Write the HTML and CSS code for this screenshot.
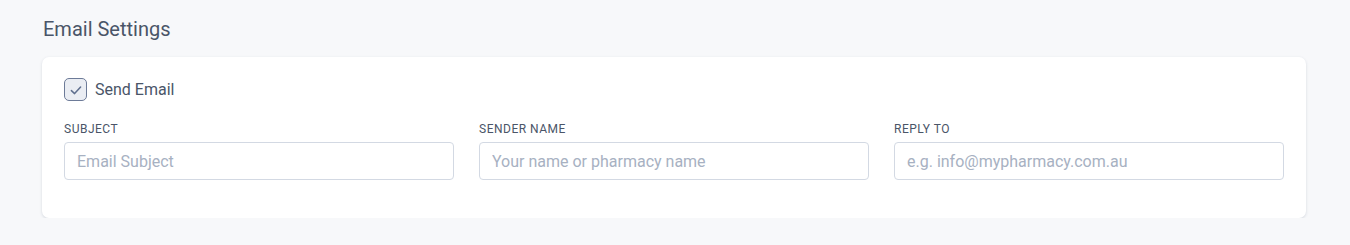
FILE: index.html
```html
<!DOCTYPE html>
<html lang="en">
  <head>
    <meta charset="UTF-8" />
    <meta name="viewport" content="width=device-width, initial-scale=1.0" />
    <title>Email Settings</title>
    <link rel="stylesheet" href="styles.css">
  </head>
  <body>
    <div class="section">
      <h2 class="section-title">Email Settings</h2>

      <div class="card">
        <label class="check-row">
          <span class="check-box">
            <svg width="14" height="14" viewBox="0 0 14 14">
              <path d="M2.4 7.6 L5.6 10.6 L11.6 4" fill="none" stroke="#5f6f8e" stroke-width="1.5" stroke-linecap="round" stroke-linejoin="round" />
            </svg>
          </span>
          <span class="check-label">Send Email</span>
        </label>

        <div class="fields">
          <div class="field">
            <label for="subject">Subject</label>
            <input type="text" id="subject" placeholder="Email Subject" />
          </div>
          <div class="field">
            <label for="senderName">Sender Name</label>
            <input type="text" id="senderName" placeholder="Your name or pharmacy name" />
          </div>
          <div class="field">
            <label for="replyTo">Reply To</label>
            <input type="text" id="replyTo" placeholder="e.g. info@mypharmacy.com.au" />
          </div>
        </div>
      </div>
    </div>
  </body>
</html>
```

FILE: styles.css
```css
body {
  font-family: Roboto, "Noto Sans", sans-serif;
  background-color: #f7f8fa;
  margin: 0;
  padding: 0;
  color: #4a5568;
}
.section {
  padding: 17px 44px 0 42px;
}
.section-title {
  font-size: 20px;
  font-weight: 400;
  color: #4a5568;
  margin: 0 0 16px 1px;
  line-height: 24px;
}
.card {
  background: #fff;
  border-radius: 7px;
  box-shadow: 0 1px 3px rgba(40, 55, 90, 0.16);
  padding: 21px 22px 38px 22px;
}
.check-row {
  display: flex;
  align-items: center;
  gap: 8px;
  cursor: pointer;
}
.check-box {
  box-sizing: border-box;
  width: 23px;
  height: 23px;
  border: 1.5px solid #6d7b98;
  border-radius: 5px;
  background: #eaedf3;
  display: flex;
  align-items: center;
  justify-content: center;
}
.check-label {
  font-size: 16px;
  color: #4a5568;
}
.fields {
  display: grid;
  grid-template-columns: repeat(3, 1fr);
  gap: 25px;
  margin-top: 21px;
}
.field label {
  display: block;
  font-size: 12px;
  text-transform: uppercase;
  letter-spacing: 0.5px;
  color: #4a5568;
  margin-bottom: 6px;
  line-height: 14px;
}
.field input {
  box-sizing: border-box;
  width: 100%;
  height: 38px;
  border: 1px solid #d3d9e3;
  border-radius: 4px;
  padding: 0 12px;
  font-family: Roboto, "Noto Sans", sans-serif;
  font-size: 16px;
  color: #4a5568;
  outline: none;
}
.field input::placeholder {
  color: #a7b1c2;
}
```
